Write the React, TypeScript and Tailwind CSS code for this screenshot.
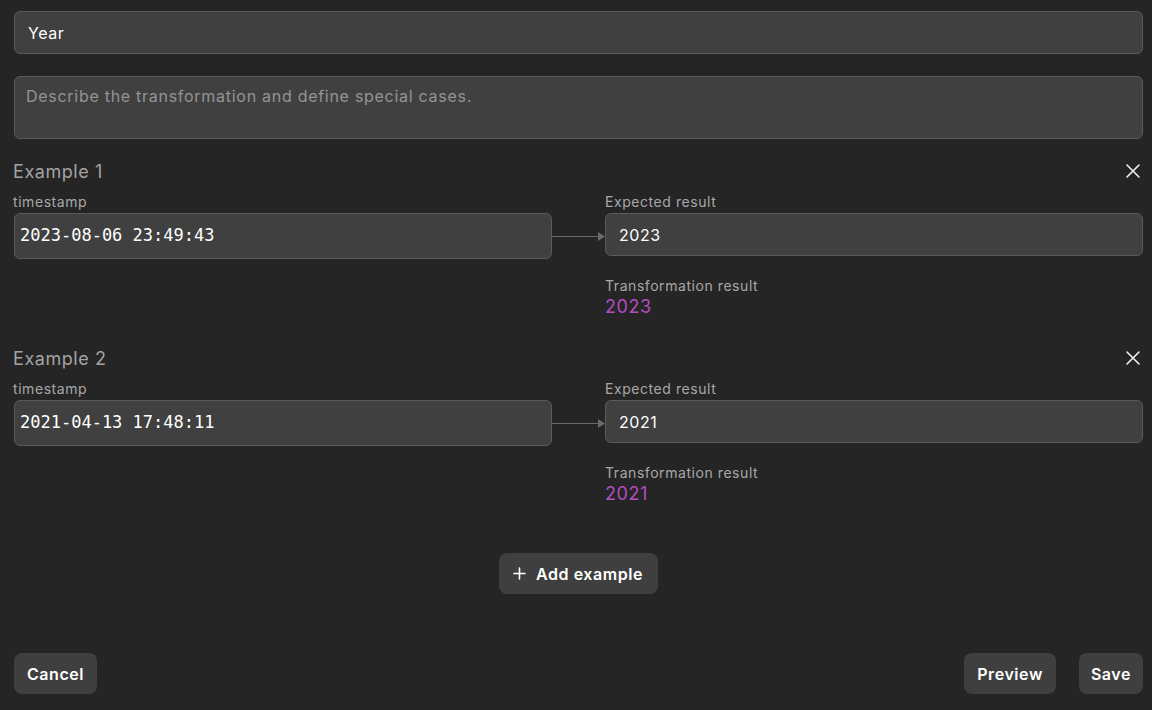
import React from 'react';

const examples = [
  { input: '2023-08-06 23:49:43', expected: '2023', result: '2023' },
  { input: '2021-04-13 17:48:11', expected: '2021', result: '2021' },
];

function CloseIcon() {
  return (
    <svg width="16" height="16" viewBox="0 0 16 16" fill="none" stroke="#f2f2f2" strokeWidth="1.6" strokeLinecap="round">
      <path d="M2 2l12 12M14 2L2 14" />
    </svg>
  );
}

function Arrow() {
  return (
    <div className="flex items-center h-[46px]">
      <div className="flex-1 h-px bg-[#6a6a6a]" />
      <svg width="7" height="9" viewBox="0 0 7 9" className="-ml-px">
        <path d="M0 0L7 4.5L0 9z" fill="#6a6a6a" />
      </svg>
    </div>
  );
}

function Example({ index, input, expected, result }: { index: number; input: string; expected: string; result: string }) {
  return (
    <div>
      <div className="flex items-center justify-between h-6">
        <span className="-ml-px text-[18px] text-[#a3a3a3]">Example {index}</span>
        <button className="mr-[2px] flex items-center justify-center">
          <CloseIcon />
        </button>
      </div>
      <div className="grid grid-cols-[1fr_53px_1fr] mt-[10px]">
        <div>
          <div className="-ml-px h-[18px] leading-[18px] text-[14px] text-[#a8a8a8]">timestamp</div>
          <div className="mt-[2px] h-[46px] flex items-center pl-[5px] bg-[#404040] border border-[#5a5a5a] rounded-md text-white text-[17px] tracking-normal font-['DejaVu_Sans_Mono',monospace]">
            {input}
          </div>
        </div>
        <div className="pt-[20px]">
          <Arrow />
        </div>
        <div>
          <div className="h-[18px] leading-[18px] text-[14px] text-[#a8a8a8]">Expected result</div>
          <div className="mt-[2px] h-[43px] flex items-center px-[13px] bg-[#404040] border border-[#5a5a5a] rounded-md text-white text-[16px]">
            {expected}
          </div>
          <div className="mt-[21px] h-[18px] leading-[18px] text-[14px] text-[#a8a8a8]">Transformation result</div>
          <div className="h-6 leading-6 text-[18px] text-[#b44dc1]">{result}</div>
        </div>
      </div>
    </div>
  );
}

export default function App() {
  return (
    <div className="min-h-screen w-full bg-[#252525] pl-[14px] pr-[9px] pt-[11px] font-['Inter',sans-serif] tracking-[0.035em]">
      <div className="h-[43px] flex items-center px-[13px] bg-[#404040] border border-[#5a5a5a] rounded-md text-white text-[16px]">
        Year
      </div>
      <div className="mt-[22px] h-[63px] px-[11px] pt-[7px] bg-[#404040] border border-[#5a5a5a] rounded-md text-[#949494] text-[16px] tracking-[0.045em]">
        Describe the transformation and define special cases.
      </div>
      <div className="mt-[20px] flex flex-col gap-[27px]">
        {examples.map((ex, i) => (
          <Example key={i} index={i + 1} {...ex} />
        ))}
      </div>
      <div className="mt-[47px] flex justify-center">
        <button className="h-[41px] flex items-center gap-[10px] pl-[14px] pr-[15px] bg-[#3f3f3f] rounded-lg text-white text-[16px] font-semibold">
          <svg width="13" height="13" viewBox="0 0 13 13" stroke="#ffffff" strokeWidth="1.6" strokeLinecap="round">
            <path d="M6.5 1v11M1 6.5h11" />
          </svg>
          Add example
        </button>
      </div>
      <div className="mt-[59px] flex items-center justify-between">
        <button className="h-[41px] px-[13px] bg-[#3f3f3f] rounded-lg text-white text-[16px] font-semibold">Cancel</button>
        <div className="flex gap-[23px]">
          <button className="h-[41px] px-[13px] bg-[#3f3f3f] rounded-lg text-white text-[16px] font-semibold">Preview</button>
          <button className="h-[41px] px-[12px] bg-[#3f3f3f] rounded-lg text-white text-[16px] font-semibold">Save</button>
        </div>
      </div>
    </div>
  );
}
